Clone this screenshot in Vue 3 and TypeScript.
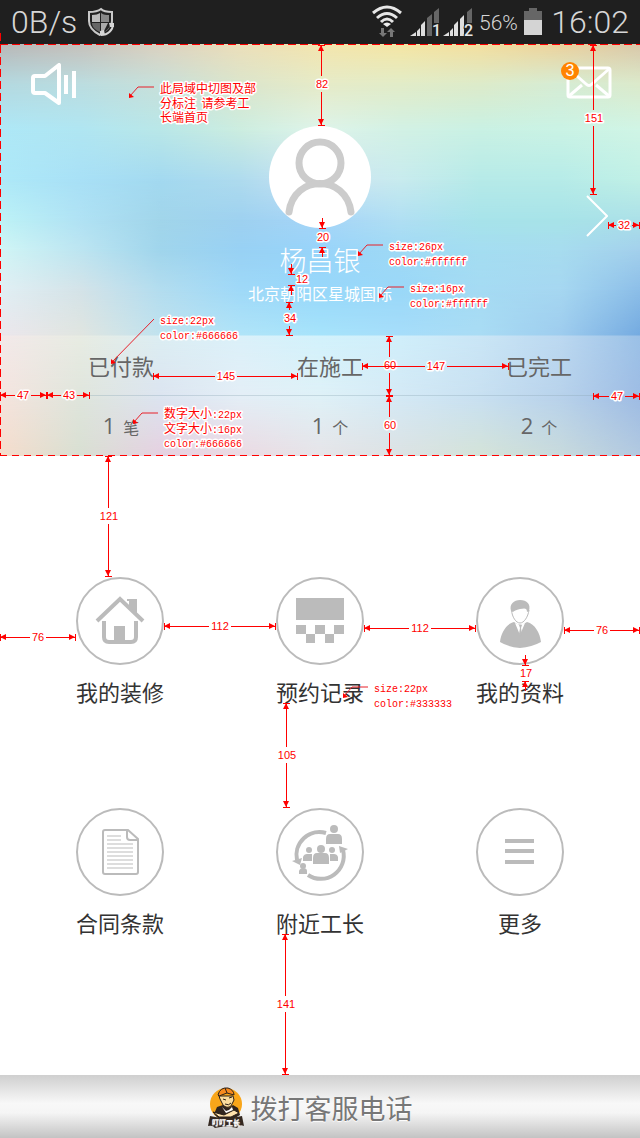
<script setup lang="ts">
interface MeshRow { y: number; colors: string[] }
interface Measure { dir: 'h' | 'v'; at: number; from: number; to: number; text: string; mid: number }
interface Pinch { x: number; top: number; bottom: number; text: string; tx: number; ty: number }
interface Note { path: string; tip: string; x: number; lines: { y: number; cjk: string; latin: string }[] }

const meshRows: MeshRow[] = [
  { y: 0, colors: ['#b8b8b8', '#c6c1bc', '#dcd2c0', '#ecdfba', '#f3e5ae', '#f5e6a4', '#f3df9f', '#ecd29c', '#d9c8aa'] },
  { y: 40, colors: ['#b4d9e0', '#bbdde0', '#c8e0da', '#dbe5cc', '#e6ebc8', '#e2ecc8', '#ddebca', '#d6ecd4', '#dceacb'] },
  { y: 86, colors: ['#aee8f7', '#b0e6f2', '#b9e7e8', '#ccede0', '#def4ea', '#d2f1e5', '#c9f1e4', '#caf3e5', '#d0f5e6'] },
  { y: 136, colors: ['#aee9f8', '#a8e0f6', '#a3d9f0', '#aedbee', '#cce3f3', '#c8ebee', '#b6eae8', '#b6ebe8', '#c0f0e6'] },
  { y: 176, colors: ['#bdf2f6', '#b0e2f4', '#a1d5ea', '#9ed1f0', '#a6d5f8', '#b0dff3', '#a7e3ea', '#a7e3e8', '#abe0e8'] },
  { y: 206, colors: ['#d0f5f5', '#bde5f1', '#a0d5ec', '#98d1f4', '#98d4fa', '#9fd9f5', '#a4ddf1', '#a7dcef', '#a3d0ec'] },
  { y: 246, colors: ['#e1eff4', '#d4e3e8', '#b3ddef', '#9fd9f8', '#98d8fa', '#9ad8f8', '#a5dbf3', '#a6d7f1', '#8cbee8'] },
  { y: 291, colors: ['#ebe6ec', '#e0e5e0', '#c0e2ee', '#b0e4f8', '#a6e3fb', '#a6ddfa', '#a9dcf4', '#9eccee', '#74aae0'] },
  { y: 292, colors: ['#f3e9ea', '#e8ece3', '#dceef3', '#dbf1fa', '#d2f2fc', '#d0effb', '#cae6f6', '#bcd9f1', '#9bc1e7'] },
  { y: 354, colors: ['#f5e4de', '#dfe5dc', '#dce4f0', '#e4eef6', '#dff1f7', '#d4e9f5', '#c8e0f1', '#b8d2eb', '#9ebce4'] },
  { y: 412, colors: ['#f5dccb', '#d8dfd2', '#e6d0e0', '#ebd9e2', '#e6e4e8', '#dce2e3', '#d4e3d8', '#c8dadc', '#b2c9e0'] },
]

const stats = [
  { label: '已付款', count: 1, unit: '笔' },
  { label: '在施工', count: 1, unit: '个' },
  { label: '已完工', count: 2, unit: '个' },
]

const menu = [
  { id: 'house', label: '我的装修' },
  { id: 'booking', label: '预约记录' },
  { id: 'person', label: '我的资料' },
  { id: 'doc', label: '合同条款' },
  { id: 'foreman', label: '附近工长' },
  { id: 'more', label: '更多' },
]

const docLines = [36, 40, 44, 48, 52, 56, 60]

const measures: Measure[] = [
  { dir: 'v', at: 321, from: 45, to: 125, text: '82', mid: 84 },
  { dir: 'v', at: 593, from: 45, to: 194, text: '151', mid: 118 },
  { dir: 'h', at: 225, from: 608, to: 639, text: '32', mid: 624 },
  { dir: 'v', at: 289, from: 302, to: 335, text: '34', mid: 318 },
  { dir: 'h', at: 376, from: 153, to: 297, text: '145', mid: 226 },
  { dir: 'v', at: 389, from: 336, to: 395, text: '60', mid: 365 },
  { dir: 'h', at: 366, from: 362, to: 508, text: '147', mid: 436 },
  { dir: 'v', at: 389, from: 396, to: 455, text: '60', mid: 425 },
  { dir: 'h', at: 395, from: 0, to: 46, text: '47', mid: 23 },
  { dir: 'h', at: 395, from: 47, to: 89, text: '43', mid: 69 },
  { dir: 'h', at: 396, from: 593, to: 639, text: '47', mid: 617 },
  { dir: 'v', at: 108, from: 456, to: 576, text: '121', mid: 516 },
  { dir: 'h', at: 637, from: 0, to: 75, text: '76', mid: 38 },
  { dir: 'h', at: 626, from: 164, to: 275, text: '112', mid: 220 },
  { dir: 'h', at: 628, from: 364, to: 475, text: '112', mid: 420 },
  { dir: 'h', at: 630, from: 564, to: 639, text: '76', mid: 602 },
  { dir: 'v', at: 286, from: 703, to: 807, text: '105', mid: 755 },
  { dir: 'v', at: 285, from: 934, to: 1074, text: '141', mid: 1004 },
]

const pinches: Pinch[] = [
  { x: 322, top: 228, bottom: 247, text: '20', tx: 323, ty: 237 },
  { x: 291, top: 274, bottom: 285, text: '12', tx: 302, ty: 279 },
  { x: 525, top: 665, bottom: 681, text: '17', tx: 526, ty: 673 },
]

const notes: Note[] = [
  { path: 'M154 87H138L130 96', tip: 'M129 98v-5l5 4z', x: 160, lines: [
    { y: 93, cjk: '此局域中切图及部', latin: '' }, { y: 108, cjk: '分标注  请参考工', latin: '' }, { y: 122, cjk: '长端首页', latin: '' }] },
  { path: 'M383 245H367L359 254', tip: 'M358 256v-5l5 4z', x: 389, lines: [
    { y: 250, cjk: '', latin: 'size:26px' }, { y: 265, cjk: '', latin: 'color:#ffffff' }] },
  { path: 'M404 287H388L380 296', tip: 'M379 298v-5l5 4z', x: 410, lines: [
    { y: 292, cjk: '', latin: 'size:16px' }, { y: 307, cjk: '', latin: 'color:#ffffff' }] },
  { path: 'M154 319L112 362', tip: 'M111 364v-5l5 4z', x: 160, lines: [
    { y: 324, cjk: '', latin: 'size:22px' }, { y: 339, cjk: '', latin: 'color:#666666' }] },
  { path: 'M158 413H142L134 422', tip: 'M133 424v-5l5 4z', x: 164, lines: [
    { y: 418, cjk: '数字大小', latin: ':22px' }, { y: 433, cjk: '文字大小', latin: ':16px' }, { y: 447, cjk: '', latin: 'color:#666666' }] },
  { path: 'M368 687H352L344 696', tip: 'M343 698v-5l5 4z', x: 374, lines: [
    { y: 692, cjk: '', latin: 'size:22px' }, { y: 707, cjk: '', latin: 'color:#333333' }] },
]

function measureLine(m: Measure): string {
  const gap = m.dir === 'v' ? 8 : m.text.length * 3 + 2
  const a = m.mid - gap
  const b = m.mid + gap
  return m.dir === 'v'
    ? `M${m.at} ${m.from}V${a}M${m.at} ${b}V${m.to}M${m.at - 3} ${m.from}h7M${m.at - 3} ${m.to}h7`
    : `M${m.from} ${m.at}H${a}M${b} ${m.at}H${m.to}M${m.from} ${m.at - 3}v7M${m.to} ${m.at - 3}v7`
}

function measureTips(m: Measure): string {
  return m.dir === 'v'
    ? `M${m.at} ${m.from}l-3 6h6zM${m.at} ${m.to}l-3 -6h6z`
    : `M${m.from} ${m.at}l6 -3v6zM${m.to} ${m.at}l-6 -3v6z`
}
</script>

<template>
  <div class="page">
    <header class="status">
      <span class="speed">0B/s</span>
      <svg class="shield" width="28" height="30" viewBox="0 0 28 30" aria-hidden="true">
        <path d="M14 2C10 5 6 5 2 5V14C2 21 7 25 13 28C20 26 25 21 25 14V5C21 5 17 5 14 2Z" fill="#222" stroke="#c9c9c9" stroke-width="2" />
        <path d="M5 8C9 8 11 7 13 6V15H5Z" fill="#bdbdbd" />
        <path d="M14 6C17 8 19 8 22 8V15H14Z" fill="#888" />
        <path d="M5 16H13V25C8 23 5 20 5 16Z" fill="#666" />
        <path d="M14 16H21L17 24H14Z" fill="#aaa" />
        <path d="M25 17C26 23 21 28 14 27" fill="none" stroke="#222" stroke-width="5" />
        <path d="M26 17C26 23 21 28 14 28" fill="none" stroke="#d5d5d5" stroke-width="2" />
        <path d="M22 16h5v4h-4zM13 24l4-1l1 5h-5z" fill="#d5d5d5" />
      </svg>
      <span class="spacer"></span>
      <svg width="148" height="36" viewBox="372 4 148 36" class="signals" aria-label="网络信号">
        <g fill="none" stroke="#e6e6e6" stroke-width="3">
          <path d="M374 13Q388 1 402 13" />
          <path d="M378 18Q388 9 398 18" />
          <path d="M382 22Q388 16 394 22" />
        </g>
        <path d="M384 24q4-3 8 0l-4 3z" fill="#eee" />
        <path d="M382 28h3v5h3l-4 4l-4-4h2zM391 37h3v-5h2l-4-4l-4 4h3z" fill="#777" />
        <path d="M428 18l5-4v22h-5zM435 12l5-4v15h-5zM468 12l5-4v15h-5z" fill="#666" />
        <path d="M411 36l6-4v4zM418 31l3-3v8h-3zM422 25l4-4v15h-4zM444 36l6-4v4zM451 31l3-3v8h-3zM455 25l4-4v15h-4zM461 19l4-4v21h-4z" fill="#dedede" />
        <text x="433" y="36" class="sim">1</text>
        <text x="465" y="36" class="sim">2</text>
        <text x="480" y="30" class="percent">56%</text>
      </svg>
      <svg width="20" height="30" viewBox="0 0 20 30" class="battery" aria-hidden="true">
        <path d="M1 4h5V1h8v3h5v24H1z" fill="#666" />
        <path d="M1 13h18v15H1z" fill="#d4d4d4" />
      </svg>
      <time class="clock">16:02</time>
    </header>

    <section class="hero">
      <svg class="mesh" viewBox="0 0 640 412" preserveAspectRatio="none" aria-hidden="true">
        <defs>
          <template v-for="(row, i) in meshRows" :key="i">
            <linearGradient :id="'tone' + i">
              <stop v-for="(c, k) in row.colors" :key="k" :offset="k / 8" :stop-color="c" />
            </linearGradient>
            <template v-if="i > 0">
              <linearGradient :id="'fade' + i" gradientUnits="userSpaceOnUse" x1="0" x2="0" :y1="meshRows[i - 1].y" :y2="row.y">
                <stop offset="0" stop-color="#fff" stop-opacity="0" />
                <stop offset="1" stop-color="#fff" />
              </linearGradient>
              <mask :id="'mask' + i" maskUnits="userSpaceOnUse" x="0" y="0" width="640" height="412">
                <rect width="640" height="412" :fill="'url(#fade' + i + ')'" />
              </mask>
            </template>
          </template>
        </defs>
        <rect
          v-for="(_, i) in meshRows" :key="i" width="640" height="412"
          :fill="'url(#tone' + i + ')'" :mask="i > 0 ? 'url(#mask' + i + ')' : undefined"
        />
      </svg>

      <div class="profile-row">
        <div class="side-left">
          <button class="plain" aria-label="公告">
            <svg width="48" height="42" viewBox="0 0 48 42">
              <path d="M5 13H15L29 2V40L15 30H5Q3 30 3 28V15Q3 13 5 13Z" fill="none" stroke="#fff" stroke-width="4" stroke-linejoin="round" />
              <path d="M36 12V31M44 8V35" stroke="#fff" stroke-width="4" />
            </svg>
          </button>
        </div>
        <div class="profile">
          <svg class="avatar" width="102" height="102" viewBox="0 0 102 102" role="img" aria-label="头像">
            <circle cx="51" cy="51" r="51" fill="#fff" />
            <g fill="none" stroke="#ccc" stroke-width="7" stroke-linecap="round">
              <ellipse cx="51" cy="37" rx="21" ry="21" />
              <path d="M20 86C25 48 77 48 82 86" />
            </g>
          </svg>
          <h1>杨昌银</h1>
          <p>北京朝阳区星城国际</p>
        </div>
        <div class="side-right">
          <button class="plain mail" aria-label="消息">
            <svg width="46" height="33" viewBox="0 0 46 33">
              <rect x="2" y="2" width="42" height="29" rx="2" fill="none" stroke="#fff" stroke-width="3" />
              <path d="M3 3L20 18Q23 21 26 18L43 3M3 30L16 19M43 30L30 19" fill="none" stroke="#fff" stroke-width="3" />
            </svg>
            <span class="badge">3</span>
          </button>
          <button class="plain next" aria-label="个人资料">
            <svg width="22" height="42" viewBox="0 0 22 42"><path d="M1 1L21 21L1 41" fill="none" stroke="#fff" stroke-width="2" /></svg>
          </button>
        </div>
      </div>

      <dl class="stats">
        <div v-for="s in stats" :key="s.label" class="stat">
          <dt>{{ s.label }}</dt>
          <dd><b>{{ s.count }}</b><span>{{ s.unit }}</span></dd>
        </div>
      </dl>
    </section>

    <nav class="menu">
      <button v-for="item in menu" :key="item.id" class="plain entry">
        <span class="ring">
          <svg width="84" height="84" viewBox="2 2 84 84" fill="#bbb" aria-hidden="true">
            <g v-if="item.id === 'house'">
              <path d="M21 44L44 22L67 44" fill="none" stroke="#bbb" stroke-width="4" />
              <path d="M51 22H61V37L53 30V24H51Z" />
              <path d="M28 44V60Q28 65 33 65H55Q60 65 60 60V44" fill="none" stroke="#bbb" stroke-width="4" />
              <path d="M38 49H49V66H38Z" />
            </g>
            <path v-else-if="item.id === 'booking'" d="M20 21h48v22H20zM20 48h10v9H20zM39 48h10v9H39zM58 48h10v9H58zM30 57h9v9h-9zM49 57h9v9h-9z" />
            <g v-else-if="item.id === 'person'">
              <path d="M35 34C33 27 38 23 44 23C51 23 55 27 53 34L51 35C51 31 49 31 44 32C40 33 38 34 37 35Z" />
              <path d="M35.500 33C36 40 40 46 44 46C48 46 52 40 53 33" fill="none" stroke="#bbb" />
              <path d="M38 45Q44 50 51 45C59 47 64 56 65 65Q56 70 44 71Q32 70 24 65C25 56 30 47 38 45Z" />
              <path d="M39 46L44 58L49 46L44 48Z" fill="#fff" />
              <path d="M43 48h3l-1 3l1 6l-2 3l-1-3l1-6z" />
            </g>
            <g v-else-if="item.id === 'doc'" fill="none" stroke="#bbb">
              <path d="M29 22H52L62 31V64Q62 66 60 66H29Q27 66 27 64V24Q27 22 29 22Z" stroke-width="2" />
              <path d="M51 22V29Q51 32 54 32H62" stroke-width="2" />
              <path d="M31 28H45M31 32H45" />
              <path v-for="y in docLines" :key="y" :d="'M31 ' + y + 'H57'" />
            </g>
            <g v-else-if="item.id === 'foreman'">
              <path d="M21 52A23 23 0 0 1 50 25M67 42A23 23 0 0 1 32 67" fill="none" stroke="#bbb" stroke-width="4" />
              <path d="M16 53l10-3l-2 7zM63 38l9 3l-8 4z" />
              <circle cx="45" cy="41" r="4" /><path d="M37 56V50Q37 45 41 45H49Q53 45 53 50V56Z" />
              <circle cx="58" cy="21" r="4" /><path d="M50 36V31Q50 26 54 26H62Q66 26 66 31V36Z" />
              <circle cx="33" cy="42" r="3" /><path d="M27 53V49Q28 46 31 46H36V53Z" />
              <circle cx="56" cy="42" r="3" /><path d="M62 53V49Q61 46 58 46H54V53Z" />
              <circle cx="27" cy="58" r="3" /><path d="M23 66V63Q24 60 27 60Q31 60 31 63V66Z" />
            </g>
            <path v-else d="M29 33H58M29 43H58M29 54H58" stroke="#bbb" stroke-width="4" />
          </svg>
        </span>
        <span class="caption">{{ item.label }}</span>
      </button>
    </nav>

    <button class="call">
      <svg width="36" height="42" viewBox="0 0 36 42" aria-hidden="true">
        <circle cx="18" cy="17" r="16" fill="#f9a61a" />
        <path d="M11 9H25L26 13L23 19Q19 22 15 18L12 12Z" fill="#fbdc9c" stroke="#2b2018" />
        <path d="M10 8Q12 0 20 1Q26 3 26 8L19 6L11 9Z" fill="#f68a1e" stroke="#2b2018" />
        <path d="M17 1L19 6M15 12l3 1M21 11l3-1M17 17q4 2 6-1" stroke="#2b2018" fill="none" />
        <path d="M6 27L9 20L15 18Q20 23 25 18L30 21L32 28L27 31H10Z" fill="#30251e" />
        <path d="M5 25L16 28L26 23L31 26L23 30L11 30Z" fill="#ffe2ad" stroke="#2b2018" />
        <path d="M14 20l4 4l3-1l3-3l1 3l-7 3z" fill="#fff" />
        <path d="M2 29Q18 33 34 29L36 39Q31 37 29 41Q18 38 7 41Q5 38 0 39Z" fill="#342820" />
        <text x="18" y="38" class="brand">叮叮工长</text>
      </svg>
      <span>拨打客服电话</span>
    </button>

    <svg class="overlay" viewBox="0 0 640 1138" preserveAspectRatio="xMidYMin meet" aria-hidden="true">
      <g fill="none" stroke="#f00" stroke-width="2" stroke-dasharray="8 4">
        <path d="M0 44H640" class="rule" />
        <path d="M0 33V456" />
      </g>
      <path d="M0 455H640" class="rule" stroke-dasharray="7 5" />
      <g v-for="(m, i) in measures" :key="'m' + i">
        <path :d="measureLine(m)" class="rule" />
        <path :d="measureTips(m)" class="tip" />
        <text :x="m.dir === 'v' ? m.at + 1 : m.mid" :y="(m.dir === 'v' ? m.mid : m.at) + 4" class="num">{{ m.text }}</text>
      </g>
      <g v-for="(p, i) in pinches" :key="'p' + i">
        <path :d="`M${p.x} ${p.top - 10}V${p.top}M${p.x} ${p.bottom}v10M${p.x - 3} ${p.top}h7M${p.x - 3} ${p.bottom}h7`" class="rule" />
        <path :d="`M${p.x} ${p.top}l-3 -6h6zM${p.x} ${p.bottom}l-3 6h6z`" class="tip" />
        <text :x="p.tx" :y="p.ty + 4" class="num">{{ p.text }}</text>
      </g>
      <g v-for="(n, i) in notes" :key="'n' + i">
        <path :d="n.path" class="leader" />
        <path :d="n.tip" class="tip" />
        <text v-for="l in n.lines" :key="l.y" :x="n.x" :y="l.y" class="note"><tspan v-if="l.cjk" class="cjk">{{ l.cjk }}</tspan><tspan v-if="l.latin">{{ l.latin }}</tspan></text>
      </g>
    </svg>
  </div>
</template>

<style>
body {
  margin: 0;
  background: #fff;
}
</style>

<style scoped>
.page {
  position: relative;
  display: flex;
  flex-direction: column;
  min-height: 100vh;
  overflow: hidden;
  font-family: "Open Sans", "Noto Sans CJK SC", sans-serif;
  background: #fff;
}
.plain {
  padding: 0;
  border: 0;
  background: none;
  font: inherit;
  cursor: pointer;
}
.plain svg, .avatar, .ring svg {
  display: block;
}
.status {
  display: flex;
  align-items: center;
  height: 44px;
  padding: 0 11px;
  background: #1f1f1f;
  color: #d6d6d6;
  font-family: Roboto, sans-serif;
  font-weight: 300;
}
.speed, .clock {
  font-size: 32px;
  line-height: 44px;
}
.shield {
  margin-left: 10px;
}
.spacer {
  flex: 1;
}
.signals {
  margin-right: 4px;
}
.battery {
  margin-right: 8px;
}
.sim {
  fill: #e6e6e6;
  stroke: #1f1f1f;
  stroke-width: 2px;
  paint-order: stroke;
  font-size: 16px;
  font-weight: 500;
}
.percent {
  fill: #d6d6d6;
  font-size: 21px;
}
.hero {
  position: relative;
}
.mesh {
  position: absolute;
  inset: 0;
  width: 100%;
  height: 100%;
}
.profile-row {
  position: relative;
  display: grid;
  grid-template-columns: 80px 1fr 80px;
}
.side-left {
  padding: 19px 0 0 30px;
}
.side-right {
  display: flex;
  flex-direction: column;
  align-items: flex-end;
  padding: 22px 28px 0 0;
}
.mail {
  position: relative;
}
.badge {
  position: absolute;
  left: -5px;
  top: -4px;
  width: 18px;
  height: 18px;
  border-radius: 50%;
  background: #ff8400;
  color: #fff;
  font-family: "Liberation Sans", sans-serif;
  font-size: 16px;
  line-height: 18px;
  text-align: center;
}
.next {
  margin: 96px 4px 0 0;
}
.profile {
  display: flex;
  flex-direction: column;
  align-items: center;
  padding: 82px 0 32px;
  color: #fff;
}
h1 {
  margin: 16px 0 6px;
  font-size: 27px;
  font-weight: 300;
  line-height: 34px;
}
p {
  margin: 0;
  font-size: 16px;
  line-height: 20px;
}
.stats {
  position: relative;
  display: flex;
  justify-content: space-between;
  margin: 0;
  padding: 0 68px 0 88px;
  color: #666;
}
.stats::before {
  content: "";
  position: absolute;
  left: 47px;
  right: 47px;
  top: 59px;
  height: 1px;
  background: rgba(140, 165, 180, 0.35);
}
.stat {
  text-align: center;
}
dt {
  font-size: 22px;
  line-height: 60px;
}
dd {
  display: flex;
  align-items: baseline;
  justify-content: center;
  gap: 8px;
  box-sizing: border-box;
  height: 60px;
  margin: 0;
  padding-top: 14px;
  font-size: 16px;
  line-height: 30px;
}
dd b {
  font-size: 22px;
  font-weight: 400;
}
.menu {
  flex: 1;
  display: grid;
  grid-template-columns: repeat(3, 88px);
  justify-content: space-between;
  align-content: start;
  row-gap: 101px;
  padding: 121px 76px 80px;
}
.entry {
  color: #333;
}
.ring {
  display: block;
  border: 2px solid #bbb;
  border-radius: 50%;
}
.caption {
  display: block;
  margin-top: 12px;
  font-size: 22px;
  line-height: 30px;
  white-space: nowrap;
}
.call {
  display: flex;
  align-items: center;
  justify-content: center;
  gap: 7px;
  height: 63px;
  padding: 2px 20px 0 0;
  border: 0;
  background: linear-gradient(#cfcfcf, #f8f8f8 45%, #f5f5f5 60%, #c3c3c3);
  color: #777;
  font-family: "Noto Sans CJK SC", sans-serif;
  font-size: 27px;
  line-height: 36px;
  text-shadow: 0 1px 1px #fff;
  cursor: pointer;
}
.brand {
  fill: #fff;
  font-size: 7px;
  font-weight: 700;
  text-anchor: middle;
}
.overlay {
  position: absolute;
  left: 0;
  top: 0;
  width: 100%;
  pointer-events: none;
}
.rule {
  fill: none;
  stroke: #f00;
  stroke-width: 1px;
  shape-rendering: crispEdges;
}
.leader {
  fill: none;
  stroke: #e8202a;
}
.tip {
  fill: #f00;
}
.num, .note {
  fill: #f00;
  stroke: #fff;
  stroke-width: 3px;
  stroke-linejoin: round;
  paint-order: stroke;
}
.num {
  font-family: "Liberation Sans", sans-serif;
  font-size: 11px;
  text-anchor: middle;
}
.note {
  font-family: "Liberation Mono", monospace;
  font-size: 10px;
  white-space: pre;
}
.cjk {
  font-family: "Noto Sans CJK SC", sans-serif;
  font-size: 12px;
}
</style>
